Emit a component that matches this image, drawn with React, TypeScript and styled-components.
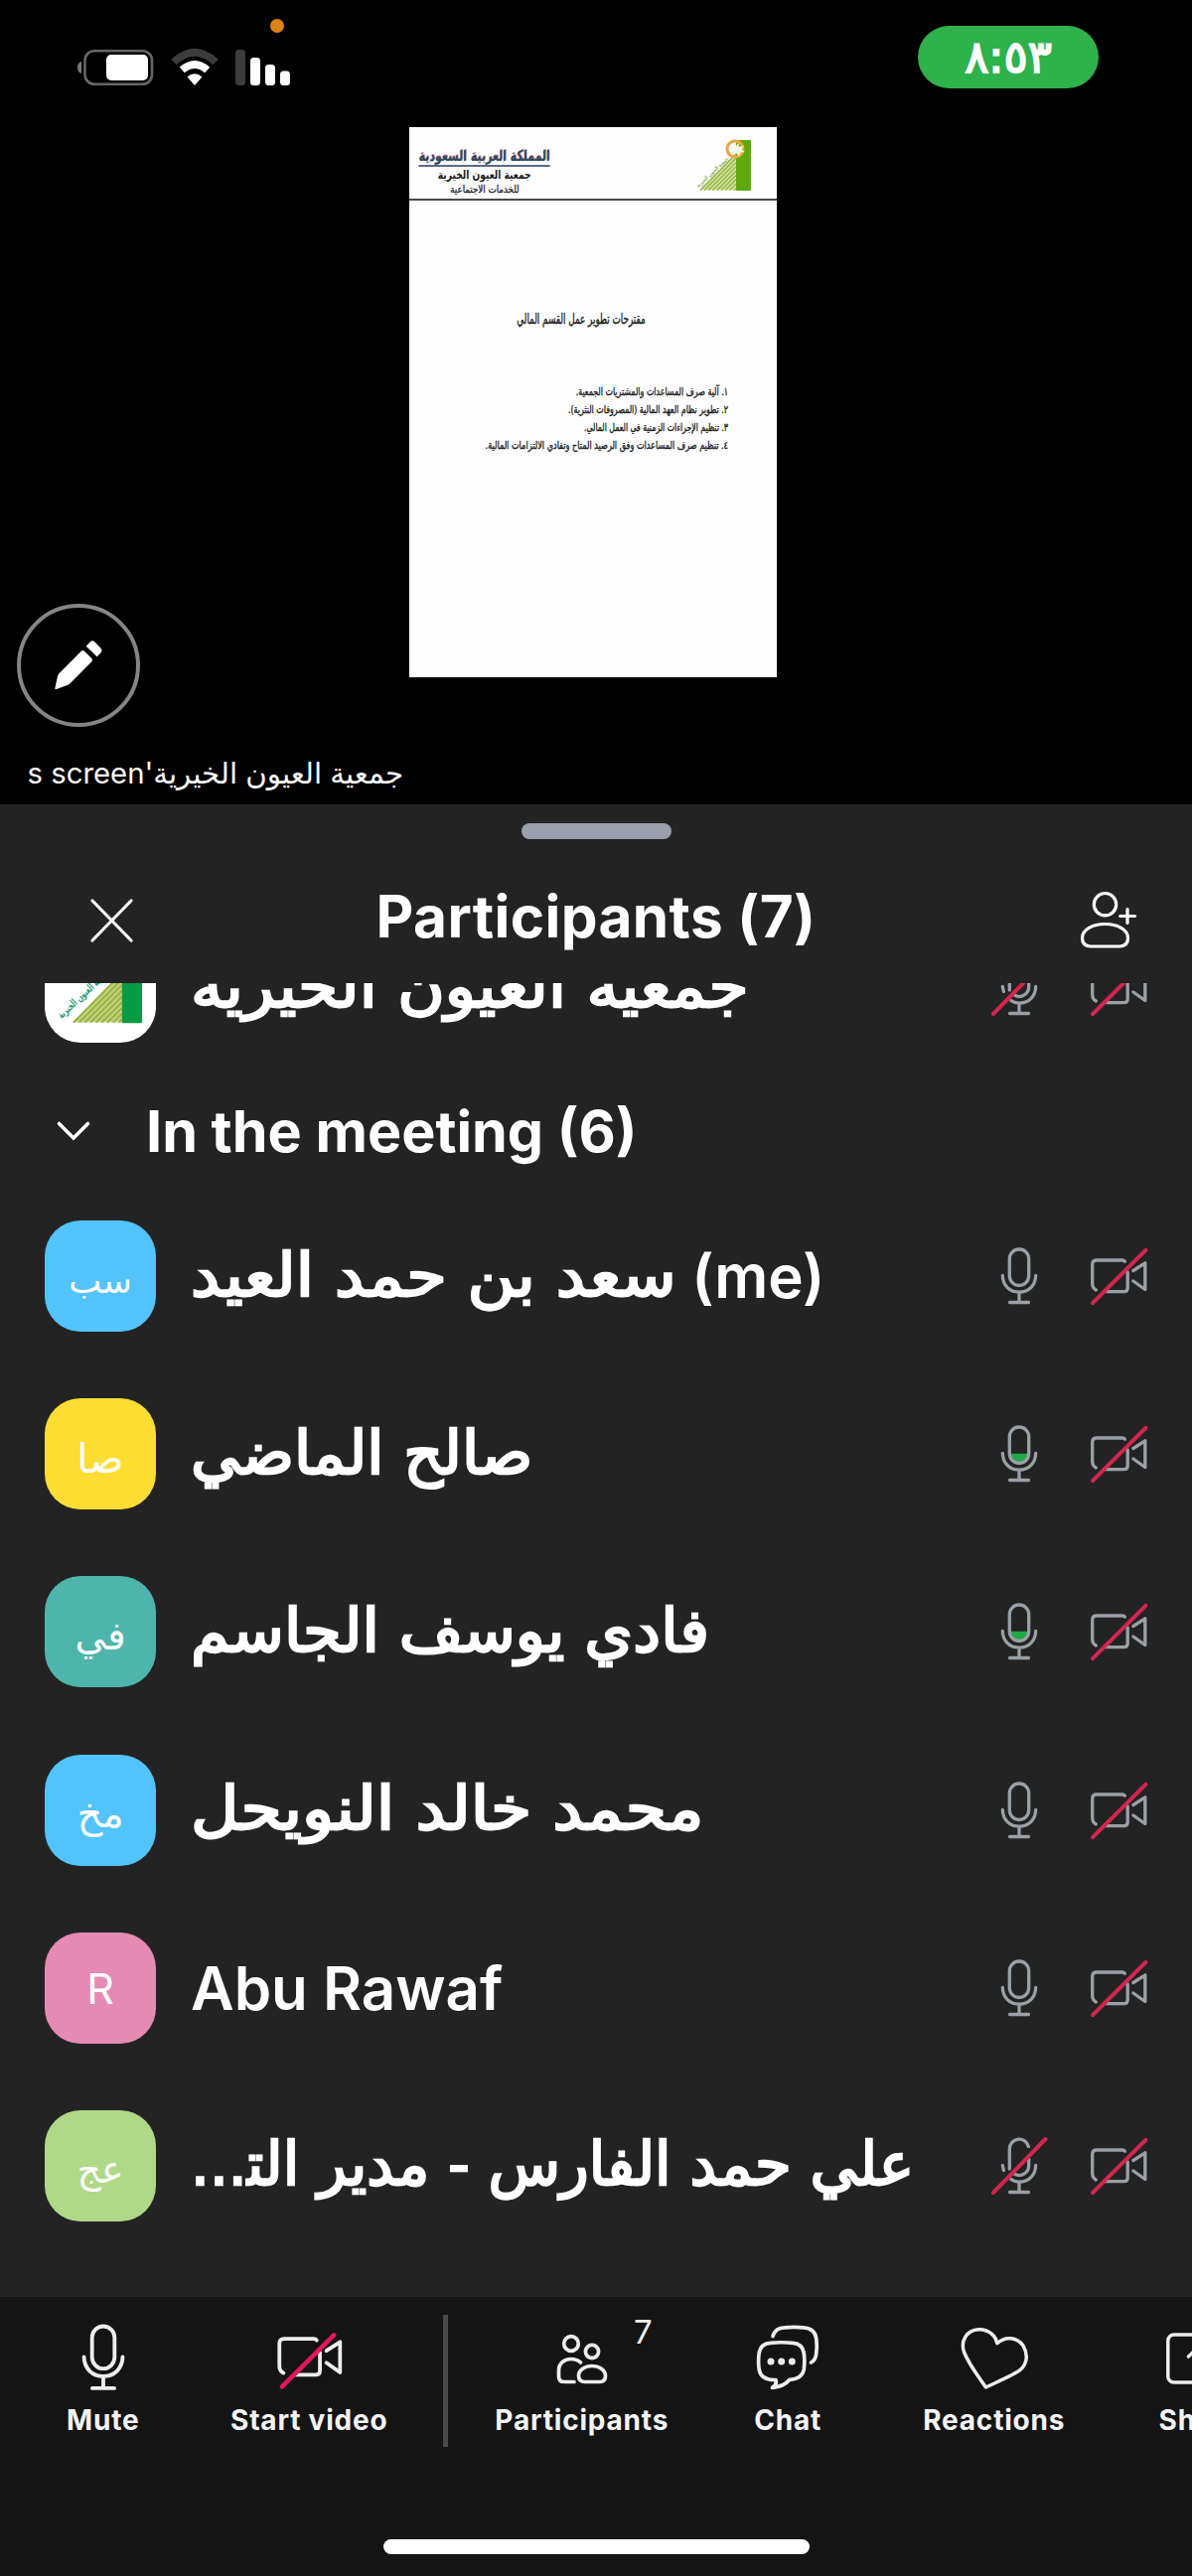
import React from "react";
import styled, { createGlobalStyle } from "styled-components";

const GlobalStyle = createGlobalStyle`
  * { box-sizing: border-box; }
  html, body { margin: 0; padding: 0; background: #000; }
  body { font-family: Inter, "DejaVu Sans", sans-serif; color: #fff; }
  svg { display: block; flex: none; overflow: visible; }
`;

const Screen = styled.div`
  width: 1200px;
  height: 2594px;
  display: flex;
  flex-direction: column;
  overflow: hidden;
  background: #000;
`;

/* ---------- shared screen area ---------- */

const Stage = styled.section`
  position: relative;
  height: 810px;
  flex: none;
  display: flex;
  flex-direction: column;
  background: #000;
`;

const StatusBar = styled.header`
  height: 128px;
  flex: none;
  display: flex;
  justify-content: space-between;
  align-items: flex-start;
  padding: 0 94px 0 78px;
`;

const StatusIcons = styled.div`
  position: relative;
  display: flex;
  align-items: flex-end;
  gap: 17px;
  padding-top: 50px;
`;

const RecordingDot = styled.span`
  position: absolute;
  left: 194px;
  top: 19px;
  width: 14px;
  height: 14px;
  border-radius: 50%;
  background: #d98516;
`;

const ClockPill = styled.div`
  margin-top: 26px;
  width: 182px;
  height: 63px;
  border-radius: 32px;
  background: #2fb14c;
  display: flex;
  align-items: center;
  justify-content: center;
`;

const Clock = styled.span`
  font: 400 45px/61px "DejaVu Sans", sans-serif;
  -webkit-text-stroke: 1.8px #fff;
`;

const Paper = styled.article`
  width: 370px;
  height: 554px;
  flex: none;
  margin-left: 412px;
  background: #fdfdfd;
  color: #1c1c1c;
  display: flex;
  flex-direction: column;
`;

const PaperHead = styled.div`
  height: 74px;
  flex: none;
  border-bottom: 2px solid #4a4a4c;
  display: flex;
  justify-content: space-between;
  padding: 12px 26px 0 10px;
`;

const Letterhead = styled.div`
  width: 132px;
  padding-top: 8px;
  display: flex;
  flex-direction: column;
  align-items: center;
  white-space: nowrap;
`;

const Kingdom = styled.div`
  height: 20px;
  font: 700 15px/18px "DejaVu Sans", sans-serif;
  color: #274a63;
  border-bottom: 2px solid #5c6a86;
  text-shadow: 1px -1px 0 #d9868a;
  transform: scaleX(0.73);
`;

const Society = styled.div`
  font: 700 12px/16px "DejaVu Sans", sans-serif;
  transform: scaleX(0.76);
`;

const Services = styled.div`
  font: 400 10px/13px "DejaVu Sans", sans-serif;
  -webkit-text-stroke: 0.3px #1c1c1c;
  transform: scaleX(0.87);
`;

const PaperTitle = styled.h2`
  margin: 109px 24px 0 0;
  font: 400 14px/20px "DejaVu Sans", sans-serif;
  -webkit-text-stroke: 0.4px #1c1c1c;
  text-align: center;
  transform: scaleX(0.63);
`;

const Proposals = styled.ol`
  list-style: none;
  margin: 55px 49px 0 0;
  padding: 0;
  font: 400 11px/18px "DejaVu Sans", sans-serif;
  -webkit-text-stroke: 0.35px #1c1c1c;
`;

const Proposal = styled.li<{ $stretch: number }>`
  white-space: nowrap;
  transform: scaleX(${(p) => p.$stretch});
  transform-origin: right center;
`;

const DrawButton = styled.button`
  position: absolute;
  left: 17px;
  top: 608px;
  width: 124px;
  height: 124px;
  padding: 0;
  border: 4px solid #858585;
  border-radius: 50%;
  background: #000;
  display: flex;
  align-items: center;
  justify-content: center;
`;

const Caption = styled.p`
  margin: 77px 0 0 29px;
  width: 377px;
  font-size: 29.3px;
  line-height: 40px;
  white-space: nowrap;
`;

/* ---------- participants sheet ---------- */

const Sheet = styled.section`
  height: 1503px;
  flex: none;
  background: #232323;
  display: flex;
  flex-direction: column;
`;

const Grabber = styled.div`
  width: 151px;
  height: 16px;
  flex: none;
  margin: 19px auto 0 525px;
  border-radius: 8px;
  background: #99a0ab;
`;

const SheetHead = styled.header`
  height: 145px;
  flex: none;
  display: flex;
  align-items: center;
  justify-content: space-between;
  padding: 18px 56px 0 91px;
`;

const SheetTitle = styled.h1`
  margin: 0 22px 7px 0;
  font-size: 58.5px;
  line-height: 64px;
  font-weight: 700;
  letter-spacing: 0.35px;
`;

const List = styled.div`
  height: 1323px;
  overflow: hidden;
  display: flex;
  flex-direction: column;
`;

const Row = styled.div<{ $first?: boolean }>`
  height: 112px;
  flex: none;
  margin-top: ${(p) => (p.$first ? "-52px" : "0")};
  margin-bottom: 67.2px;
  padding: 0 44px 0 45px;
  display: flex;
  align-items: center;
`;

const Avatar = styled.div<{ $color: string }>`
  width: 112px;
  height: 112px;
  flex: none;
  border-radius: 36px;
  background: ${(p) => p.$color};
  display: flex;
  align-items: center;
  justify-content: center;
`;

const LogoHolder = styled.div`
  padding: 2px 0 0 11px;
`;

const Initials = styled.span<{ $size: number; $drop: number }>`
  padding-top: ${(p) => p.$drop}px;
  font-size: ${(p) => p.$size}px;
  line-height: 50px;
`;

const Name = styled.div`
  flex: 1;
  min-width: 0;
  padding-left: 35px;
  font-size: 60px;
  line-height: 80px;
  font-weight: 600;
  white-space: nowrap;
`;

const Arabic = styled.span<{ $stretch: number; $after?: number }>`
  display: inline-block;
  margin-right: ${(p) => p.$after ?? 0}px;
  font-family: "DejaVu Sans", sans-serif;
  font-weight: 400;
  font-size: 60px;
  -webkit-text-stroke: 2.4px #fff;
  transform: translateY(-2px) scaleX(${(p) => p.$stretch});
  transform-origin: left center;
`;

const Devices = styled.div`
  display: flex;
  gap: 40px;
  flex: none;
`;

const GroupHead = styled.div`
  height: 80px;
  flex: none;
  margin: -18.2px 0 50px;
  padding-left: 57px;
  display: flex;
  align-items: center;
  gap: 56px;
`;

const GroupTitle = styled.h2`
  margin: 0;
  font-size: 57.5px;
  line-height: 80px;
  font-weight: 650;
`;

/* ---------- bottom toolbar ---------- */

const Toolbar = styled.nav`
  height: 281px;
  flex: none;
  overflow: hidden;
  background: #141415;
  display: flex;
  flex-direction: column;
  justify-content: space-between;
`;

const Tools = styled.div`
  height: 160px;
  display: flex;
`;

const Tool = styled.div`
  position: relative;
  width: 207.5px;
  height: 160px;
  flex: none;
  display: flex;
  flex-direction: column;
  align-items: center;
`;

const ToolIcon = styled.div<{ $top: number }>`
  height: 104px;
  padding-top: ${(p) => p.$top}px;
`;

const ToolLabel = styled.span`
  font-size: 28px;
  line-height: 40px;
  font-weight: 700;
  letter-spacing: 0.8px;
  color: #f4f4f4;
`;

const Count = styled.span`
  position: absolute;
  left: 156px;
  top: 15px;
  font-size: 33px;
  line-height: 40px;
  color: #f0f0f0;
`;

const Divider = styled.div`
  width: 5px;
  height: 133px;
  flex: none;
  margin: 18px 31px 0;
  background: #49494b;
`;

const HomeIndicator = styled.div`
  width: 429px;
  height: 15px;
  margin: 0 0 22px 386px;
  border-radius: 8px;
  background: #fff;
`;

/* ---------- drawings ---------- */

const GREY = "#9b9fa8";
const RED = "#d2264f";

const Mic = ({ size = 60, color = GREY, level = false }: { size?: number; color?: string; level?: boolean }) => (
  <svg width={size} height={size} viewBox="0 0 60 60" fill="none" stroke={color} strokeWidth="3.3" strokeLinecap="round">
    {level && <path d="M20.3 29.7H39.7A9.7 9.7 0 0 1 20.3 29.7Z" fill="#1fa845" stroke="none" />}
    <rect x="20.3" y="3" width="19.4" height="36.5" rx="9.7" />
    <path d="M13.3 29.5C13.6 39.5 20.5 46.2 30 46.2S46.4 39.5 46.7 29.5M30 46.2V56.5M20.5 56.5H39.5" />
  </svg>
);

const MicOff = () => (
  <svg width="60" height="60" viewBox="0 0 60 60" fill="none" stroke={GREY} strokeWidth="3.3" strokeLinecap="round">
    <path d="M20.3 33V12.7A9.7 9.7 0 0 1 39.4 10.5M39.7 23V29.8A9.7 9.7 0 0 1 26 38.6" />
    <path d="M13.3 29.5L14.4 34.5M22 43.7C24.3 45.3 27 46.2 30 46.2C39.5 46.2 46.4 39.5 46.7 29.5M30 46.2V56.5M20.5 56.5H39.5" />
    <path d="M4 57L56.5 3" stroke={RED} strokeWidth="4" />
  </svg>
);

const CamOff = ({ size = 60, color = GREY, bright = false }: { size?: number; color?: string; bright?: boolean }) => (
  <svg width={size} height={size} viewBox="0 0 60 60" fill="none" stroke={color} strokeWidth="3.3" strokeLinecap="round" strokeLinejoin="round">
    <path d="M36.4 15.3Q35.4 14 34 14H8Q3.7 14 3.7 18.3V38Q3.7 42 7.3 44M16.7 45.6H35.5Q39.2 45.6 39.2 42V26" />
    <path d="M44.9 24.5L56.8 16.8V43.5L44.9 35" />
    <path d={bright ? "M6 56L51.5 10.8" : "M4 57.2L57.4 3.8"} stroke={bright ? "#e0185a" : RED} strokeWidth="4" />
  </svg>
);

const Battery = () => (
  <svg width="77" height="36" viewBox="0 0 77 36">
    <path d="M4 12Q0 13 0 18T4 24Z" fill="#777" />
    <rect x="7.5" y="1.2" width="67.5" height="33.6" rx="9.5" fill="none" stroke="#666" strokeWidth="2.6" />
    <rect x="29" y="5" width="42" height="26" rx="5" fill="#fff" />
  </svg>
);

const Wifi = () => (
  <svg width="48" height="36" viewBox="0 0 48 36" fill="none">
    <path d="M3 12.5Q24 -7 45 12.5" stroke="#3c3c3c" strokeWidth="7.5" />
    <path d="M11.3 20.5Q24 9.5 36.7 20.5" stroke="#fff" strokeWidth="7.5" />
    <path d="M16.5 27.5Q24 21 31.5 27.5L24 36Z" fill="#fff" />
  </svg>
);

const Signal = () => (
  <svg width="55" height="36" viewBox="0 0 55 36" fill="#fff">
    <rect x="0" y="0" width="10" height="36" rx="3.5" fill="#3c3c3c" />
    <rect x="15" y="8" width="10" height="28" rx="3.5" />
    <rect x="30" y="15" width="10" height="21" rx="3.5" />
    <rect x="45" y="21.5" width="10" height="14.5" rx="3.5" />
  </svg>
);

const Pencil = () => (
  <svg width="48" height="50" viewBox="0 0 48 50" fill="#fff">
    <path d="M27 10.5Q28.5 9.2 30 10.7L37.5 18.3Q38.7 19.7 37.4 21.2L15.5 43.2Q14 44.7 12 45.3L1.8 49Q0 49.6 .4 47.7L2.8 36.7Q3.2 34.6 4.7 33Z" />
    <path d="M31.7 5.7L35.6 1.6Q38 -.8 40.5 1.5L46.3 7.4Q48.7 10 46.4 12.5L42.6 16.3Z" />
  </svg>
);

const Close = () => (
  <svg width="43" height="44" viewBox="0 0 43 44" stroke="#fff" strokeWidth="3.2" strokeLinecap="round">
    <path d="M2 2L41 42M41 2L2 42" />
  </svg>
);

const Chevron = () => (
  <svg width="34" height="20" viewBox="0 0 34 20" fill="none" stroke="#fff" strokeWidth="3.6" strokeLinecap="round">
    <path d="M2.5 2.5L17 17L31.5 2.5" />
  </svg>
);

const AddPerson = () => (
  <svg width="56" height="57" viewBox="0 0 56 57" fill="none" stroke="#fff" strokeWidth="3.2" strokeLinecap="round">
    <circle cx="24.5" cy="12.7" r="11.2" />
    <path d="M9.5 55Q1.5 54.5 1.5 46.5C1.5 38 12 32.5 24.5 32.5S47.5 38 47.5 46.5Q47.5 54.5 39.5 55Z" />
    <path d="M47 17.5V31.5M39.7 24.5H54.5" />
  </svg>
);

const WHITE = "#eceded";

const People = () => (
  <svg width="50" height="50" viewBox="0 0 50 50" fill="none" stroke={WHITE} strokeWidth="3.7" strokeLinecap="round">
    <circle cx="14" cy="9" r="7.3" />
    <circle cx="35" cy="17" r="6.6" />
    <path d="M17 47.5H7Q1.500 47.5 1.500 42V36C1.500 29 7 24.5 13.5 24.5Q20 24.5 23.500 28" />
    <path d="M28 47.5Q21.500 47.5 21.500 41.5C21.500 35.5 28 31.5 35 31.5S48.5 35.5 48.5 41.5Q48.5 47.5 43 47.5Z" />
  </svg>
);

const ChatBubbles = () => (
  <svg width="62" height="64" viewBox="0 0 62 64" fill="none" stroke={WHITE} strokeWidth="3.7" strokeLinecap="round" strokeLinejoin="round">
    <path d="M16 10.5Q18.5 1.8 28 1.8Q37 .8 47 1.8Q58.5 2.6 59.8 13Q60.8 21 59.7 28.5Q59 34.5 54.5 37" />
    <path d="M19 54.5Q4 55 2.2 44Q1 35.5 2.2 27.5Q3.5 18 13.5 17.3Q24.5 16.2 36 17.3Q46 18 47.3 27.5Q48.4 35.5 47.3 44Q45.5 53.5 33 54.3Q27 61.5 15.5 62.3Q20.5 59.5 19 54.5Z" />
    <g fill={WHITE} stroke="none">
      <circle cx="14" cy="36" r="3.5" />
      <circle cx="24.7" cy="36" r="3.5" />
      <circle cx="35.3" cy="36" r="3.5" />
    </g>
  </svg>
);

const Heart = () => (
  <svg width="68" height="62" viewBox="0 0 68 62" fill="none" stroke={WHITE} strokeWidth="3.5" strokeLinejoin="round">
    <path d="M25.5 60C18 49 9 38 3.5 24.5C-.5 12 7 2.5 18 1.8C28 1.2 35.5 8 36.8 15.8C45 8 57 9.5 63 18C69 28.5 66.5 39 57 44.5C47 50.5 36 55 25.5 60Z" />
  </svg>
);

const ShareBox = () => (
  <svg width="68" height="52" viewBox="0 0 68 52" fill="none" stroke={WHITE} strokeWidth="3.5" strokeLinecap="round" strokeLinejoin="round">
    <rect x="1.8" y="2" width="64" height="48" rx="6" />
    <path d="M22.5 24L34 13L45.5 24M34 14V38" />
  </svg>
);

const Logo = ({ width, dark = false }: { width: number; dark?: boolean }) => {
  const green = dark ? "#0b9a44" : "#5fa80e";
  return (
    <svg width={width} height={(width * 52) / 54} viewBox="0 0 54 52">
      <path d="M2 51.5L39 14V51.5Z" fill={dark ? "#c3cf7d" : "#d3e0a0"} />
      <g stroke="#93b43e" strokeWidth="1.3">
        {[0, 1, 2, 3, 4, 5, 6, 7, 8].map((i) => (
          <path key={i} d={`M${3 + i * 4.2} 51.5L39 ${15 + i * 4.3}`} />
        ))}
      </g>
      <rect x="39" y="1" width="15" height="51" rx="1" fill={green} />
      <circle cx="38" cy="10" r="8" fill="none" stroke="#e9a544" strokeWidth="3" />
      <path d="M41 4L42.5 8L47 6.5L44.5 10.5L48 13L43.5 13.5L42 17.5L39 14L35 15.5L36.5 11L34 8L38.5 8Z" fill="#f4fbe4" />
      <text
        x="0"
        y="0"
        transform={dark ? "translate(-6 49) rotate(-43)" : "translate(1 49) rotate(-43)"}
        fontSize={dark ? 8 : 5.5}
        fontFamily="DejaVu Sans"
        fontWeight="700"
        fill={dark ? "#2f9c75" : "#7fae6a"}
        textLength={dark ? 50 : 42}
        lengthAdjust="spacingAndGlyphs"
      >
        جمعية العيون الخيرية
      </text>
    </svg>
  );
};

/* ---------- data ---------- */

type Person = {
  name: string;
  stretch?: number;
  after?: number;
  suffix?: string;
  initials: string;
  initialsSize: number;
  color: string;
  level?: boolean;
  muted?: boolean;
  rtl?: boolean;
};

const people: Person[] = [
  { name: "سعد بن حمد العيد", stretch: 1.093, after: 42, suffix: " (me)", initials: "سب", initialsSize: 35, color: "#53c3fb" },
  { name: "صالح الماضي", stretch: 1.03, initials: "صا", initialsSize: 41, color: "#fddd34", level: true },
  { name: "فادي يوسف الجاسم", stretch: 1.042, initials: "في", initialsSize: 39, color: "#4fb5ac", level: true },
  { name: "محمد خالد النويحل", stretch: 1.11, initials: "مخ", initialsSize: 40, color: "#53c3fb" },
  { name: "Abu Rawaf", initials: "R", initialsSize: 43, color: "#e48ab5" },
  { name: "علي حمد الفارس - مدير الت\u200d...", stretch: 0.99, initials: "عج", initialsSize: 38, color: "#afd887", muted: true, rtl: true },
];

const proposals = [
  { text: "١. آلية صرف المساعدات والمشتريات الجمعية.", stretch: 0.72 },
  { text: "٢. تطوير نظام العهد المالية (المصروفات النثرية).", stretch: 0.72 },
  { text: "٣. تنظيم الإجراءات الزمنية في العمل المالي.", stretch: 0.71 },
  { text: "٤. تنظيم صرف المساعدات وفق الرصيد المتاح وتفادي الالتزامات المالية.", stretch: 0.74 },
];

export default function App() {
  return (
    <>
      <GlobalStyle />
      <Screen>
        <Stage>
          <StatusBar>
            <StatusIcons>
              <Battery />
              <Wifi />
              <Signal />
              <RecordingDot />
            </StatusIcons>
            <ClockPill>
              <Clock>٨:٥٣</Clock>
            </ClockPill>
          </StatusBar>
          <Paper>
            <PaperHead>
              <Letterhead dir="rtl">
                <Kingdom>المملكة العربية السعودية</Kingdom>
                <Society>جمعية العيون الخيرية</Society>
                <Services>للخدمات الاجتماعية</Services>
              </Letterhead>
              <Logo width={54} />
            </PaperHead>
            <PaperTitle dir="rtl">مقترحات تطوير عمل القسم المالي</PaperTitle>
            <Proposals dir="rtl">
              {proposals.map((p) => (
                <Proposal key={p.text} $stretch={p.stretch}>
                  {p.text}
                </Proposal>
              ))}
            </Proposals>
          </Paper>
          <Caption dir="rtl">جمعية العيون الخيرية's screen</Caption>
          <DrawButton aria-label="Annotate">
            <Pencil />
          </DrawButton>
        </Stage>

        <Sheet>
          <Grabber />
          <SheetHead>
            <Close />
            <SheetTitle>Participants (7)</SheetTitle>
            <AddPerson />
          </SheetHead>
          <List>
            <Row $first>
              <Avatar $color="#fff">
                <LogoHolder>
                  <Logo width={73} dark />
                </LogoHolder>
              </Avatar>
              <Name>
                <Arabic $stretch={1.08}>جمعية العيون الخيرية</Arabic>
              </Name>
              <Devices>
                <MicOff />
                <CamOff />
              </Devices>
            </Row>
            <GroupHead>
              <Chevron />
              <GroupTitle>In the meeting (6)</GroupTitle>
            </GroupHead>
            {people.map((p) => (
              <Row key={p.name}>
                <Avatar $color={p.color}>
                  <Initials $size={p.initialsSize} $drop={p.stretch ? 7 : 0}>
                    {p.initials}
                  </Initials>
                </Avatar>
                <Name>
                  {p.stretch ? (
                    <Arabic $stretch={p.stretch} $after={p.after} dir={p.rtl ? "rtl" : "ltr"}>
                      {p.name}
                    </Arabic>
                  ) : (
                    p.name
                  )}
                  {p.suffix}
                </Name>
                <Devices>
                  {p.muted ? <MicOff /> : <Mic level={p.level} />}
                  <CamOff />
                </Devices>
              </Row>
            ))}
          </List>
        </Sheet>

        <Toolbar>
          <Tools>
            <Tool>
              <ToolIcon $top={26}>
                <Mic size={70} color={WHITE} />
              </ToolIcon>
              <ToolLabel>Mute</ToolLabel>
            </Tool>
            <Tool>
              <ToolIcon $top={26}>
                <CamOff size={69} color={WHITE} bright />
              </ToolIcon>
              <ToolLabel>Start video</ToolLabel>
            </Tool>
            <Divider />
            <Tool>
              <ToolIcon $top={38}>
                <People />
              </ToolIcon>
              <Count>7</Count>
              <ToolLabel>Participants</ToolLabel>
            </Tool>
            <Tool>
              <ToolIcon $top={29}>
                <ChatBubbles />
              </ToolIcon>
              <ToolLabel>Chat</ToolLabel>
            </Tool>
            <Tool>
              <ToolIcon $top={31}>
                <Heart />
              </ToolIcon>
              <ToolLabel>Reactions</ToolLabel>
            </Tool>
            <Tool>
              <ToolIcon $top={36}>
                <ShareBox />
              </ToolIcon>
              <ToolLabel>Share</ToolLabel>
            </Tool>
          </Tools>
          <HomeIndicator />
        </Toolbar>
      </Screen>
    </>
  );
}
